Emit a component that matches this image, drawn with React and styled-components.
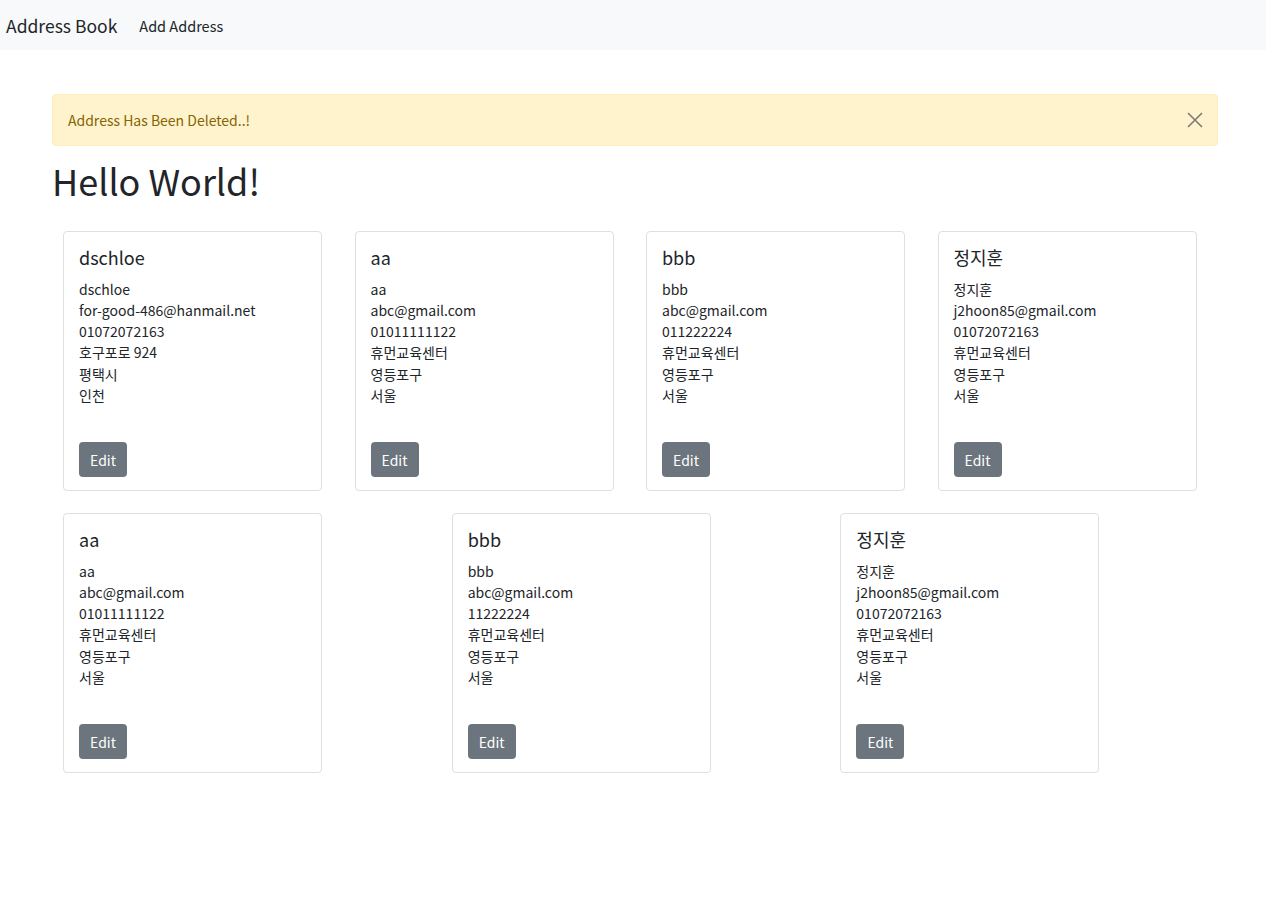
import React from 'react';
import styled, { createGlobalStyle } from 'styled-components';

const GlobalStyle = createGlobalStyle`
  body {
    margin: 0;
    background: #fff;
    color: #212529;
    font-family: "Noto Sans CJK KR", "Noto Sans", sans-serif;
  }
`;

const NavBar = styled.nav`
  display: flex;
  align-items: center;
  height: 50px;
  padding: 0 6px;
  background-color: #f8f9fa;
`;

const Brand = styled.span`
  font-size: 17.5px;
  color: #212529;
  margin-right: 22px;
`;

const NavLink = styled.span`
  font-size: 14.5px;
  color: #212529;
`;

const Container = styled.main`
  padding: 44px 48px 40px 52px;
`;

const Alert = styled.div`
  display: flex;
  align-items: center;
  justify-content: space-between;
  height: 52px;
  box-sizing: border-box;
  padding: 0 14px 0 15px;
  background-color: #fff3cd;
  border: 1px solid #ffeeba;
  border-radius: 4px;
  color: #856404;
  font-size: 14px;
`;

const CloseButton = styled.button`
  display: flex;
  padding: 0;
  border: none;
  background: none;
  color: #7d7b72;
  cursor: pointer;
`;

const Title = styled.h1`
  margin: 13px 0 29px;
  font-size: 36px;
  font-weight: 400;
  line-height: 1.2;
`;

const Row = styled.div`
  display: flex;
  & + & {
    margin-top: 22px;
  }
`;

const Col = styled.div`
  flex: 1;
  padding-left: 11px;
`;

const Card = styled.div`
  width: 259px;
  height: 260px;
  box-sizing: border-box;
  padding: 15px 15px 13px;
  border: 1px solid #dfdfdf;
  border-radius: 4px;
  display: flex;
  flex-direction: column;
`;

const CardTitle = styled.h5`
  margin: 0 0 10px;
  font-size: 18px;
  font-weight: 400;
  line-height: 1.2;
  color: #212529;
`;

const Line = styled.div`
  font-size: 14px;
  line-height: 21.2px;
  color: #212529;
`;

const EditButton = styled.button`
  margin-top: auto;
  align-self: flex-start;
  width: 48px;
  height: 35px;
  border: none;
  border-radius: 4px;
  background-color: #6c757d;
  color: #fff;
  font-family: inherit;
  font-size: 14px;
  cursor: pointer;
`;

const rows = [
  [
    { name: 'dschloe', email: 'for-good-486@hanmail.net', phone: '01072072163', street: '호구포로 924', city: '평택시', region: '인천' },
    { name: 'aa', email: 'abc@gmail.com', phone: '01011111122', street: '휴먼교육센터', city: '영등포구', region: '서울' },
    { name: 'bbb', email: 'abc@gmail.com', phone: '011222224', street: '휴먼교육센터', city: '영등포구', region: '서울' },
    { name: '정지훈', email: 'j2hoon85@gmail.com', phone: '01072072163', street: '휴먼교육센터', city: '영등포구', region: '서울' },
  ],
  [
    { name: 'aa', email: 'abc@gmail.com', phone: '01011111122', street: '휴먼교육센터', city: '영등포구', region: '서울' },
    { name: 'bbb', email: 'abc@gmail.com', phone: '11222224', street: '휴먼교육센터', city: '영등포구', region: '서울' },
    { name: '정지훈', email: 'j2hoon85@gmail.com', phone: '01072072163', street: '휴먼교육센터', city: '영등포구', region: '서울' },
  ],
];

function App() {
  return (
    <>
      <GlobalStyle />
      <NavBar>
        <Brand>Address Book</Brand>
        <NavLink>Add Address</NavLink>
      </NavBar>
      <Container>
        <Alert>
          <span>Address Has Been Deleted..!</span>
          <CloseButton aria-label="Close">
            <svg width="16" height="16" viewBox="0 0 16 16" fill="none" stroke="currentColor" strokeWidth="1.6">
              <path d="M1 1L15 15M15 1L1 15" />
            </svg>
          </CloseButton>
        </Alert>
        <Title>Hello World!</Title>
        {rows.map((row, i) => (
          <Row key={i}>
            {row.map((a, j) => (
              <Col key={j}>
                <Card>
                  <CardTitle>{a.name}</CardTitle>
                  <Line>{a.name}</Line>
                  <Line>{a.email}</Line>
                  <Line>{a.phone}</Line>
                  <Line>{a.street}</Line>
                  <Line>{a.city}</Line>
                  <Line>{a.region}</Line>
                  <EditButton>Edit</EditButton>
                </Card>
              </Col>
            ))}
          </Row>
        ))}
      </Container>
    </>
  );
}

export default App;
